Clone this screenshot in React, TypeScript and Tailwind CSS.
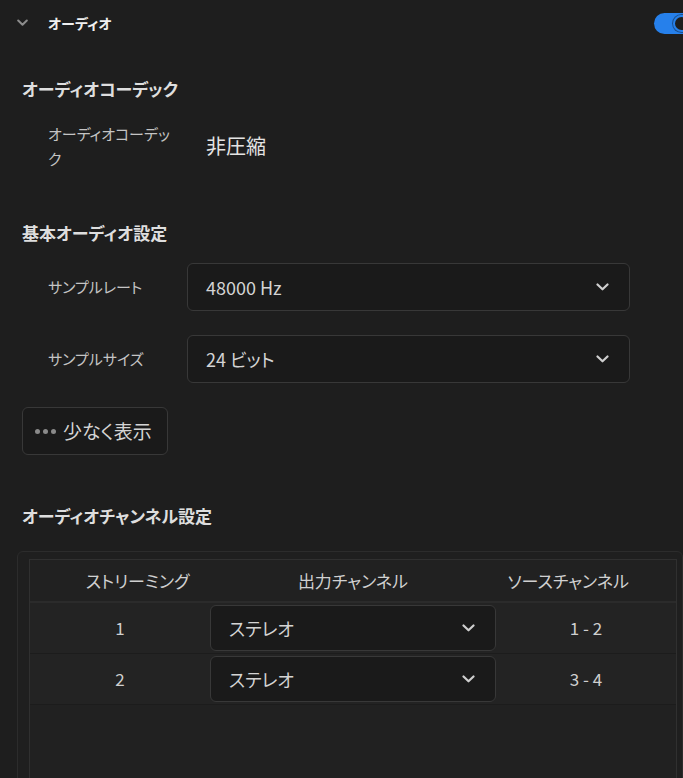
import React from 'react';

const font = { fontFamily: '"Noto Sans CJK JP", "Noto Sans", sans-serif' };

const Chevron = ({ className = '' }: { className?: string }) => (
    <svg width="13" height="8" viewBox="0 0 13 8" className={className} fill="none">
        <path d="M1.5 1.5 L6.5 6.3 L11.5 1.5" stroke="currentColor" strokeWidth="2.2" strokeLinecap="round" strokeLinejoin="round" />
    </svg>
);

const Select = ({ value, className = '' }: { value: string; className?: string }) => (
    <div className={`flex items-center justify-between rounded-md border border-[#383838] bg-[#1a1a1a] pl-[18px] pr-[20px] text-[#d4d4d4] ${className}`}>
        <span>{value}</span>
        <Chevron className="text-[#cfcfcf]" />
    </div>
);

const Heading = ({ children, className = '' }: { children: React.ReactNode; className?: string }) => (
    <h2 className={`pl-[22px] text-[17px] leading-[24px] font-bold text-[#dedede] ${className}`}>{children}</h2>
);

const rows = [
    { n: '1', out: 'ステレオ', src: '1 - 2' },
    { n: '2', out: 'ステレオ', src: '3 - 4' },
];

export default function App() {
    return (
        <div style={font} className="w-[683px] h-[778px] overflow-hidden bg-[#1e1e1e] [font-feature-settings:'palt']">
            {/* section header */}
            <div className="flex items-center h-[46px] pl-[17px]">
                <svg width="11" height="8" viewBox="0 0 11 8" fill="none" className="text-[#8c8c8c]">
                    <path d="M1.2 1.5 L5.5 5.8 L9.8 1.5" stroke="currentColor" strokeWidth="2" strokeLinecap="round" strokeLinejoin="round" />
                </svg>
                <span className="ml-[20px] text-[14px] font-bold text-[#f0f0f0]">オーディオ</span>
                <div className="flex-1" />
                <div className="relative shrink-0 w-[40px] h-[21px] rounded-full bg-[#2680eb] mr-[-11px]">
                    <div className="absolute right-[4px] top-[2px] w-[17px] h-[17px] rounded-full bg-[#1e1e1e] border-2 border-[#2680eb] shadow-[0_0_0_1px_#1a4f8f]" />
                </div>
            </div>

            <Heading className="mt-[31px]">オーディオコーデック</Heading>
            <div className="flex items-center mt-[20px] pl-[48px]">
                <div className="w-[158px]">
                    <p className="w-[122px] text-[15px] leading-[25px] text-[#c4c4c4]">オーディオコーデック</p>
                </div>
                <span className="text-[20px] text-[#e4e4e4]">非圧縮</span>
            </div>

            <Heading className="mt-[50px]">基本オーディオ設定</Heading>
            <div className="flex flex-col gap-[24px] mt-[18px] pl-[48px]">
                <div className="flex items-center">
                    <span className="w-[139px] text-[15px] text-[#c4c4c4]">サンプルレート</span>
                    <Select value="48000 Hz" className="w-[443px] h-[48px] text-[18px]" />
                </div>
                <div className="flex items-center">
                    <span className="w-[139px] text-[15px] text-[#c4c4c4]">サンプルサイズ</span>
                    <Select value="24 ビット" className="w-[443px] h-[48px] text-[18px]" />
                </div>
            </div>

            <div className="pl-[22px] mt-[24px]">
                <button className="flex items-center w-[146px] h-[48px] rounded-md border border-[#383838] bg-[#1a1a1a] pl-[12px] text-[19px] text-[#d4d4d4]">
                    <span className="flex gap-[3px] mr-[7px]">
                        <span className="w-[5px] h-[5px] rounded-full bg-[#8a8a8a]" />
                        <span className="w-[5px] h-[5px] rounded-full bg-[#8a8a8a]" />
                        <span className="w-[5px] h-[5px] rounded-full bg-[#8a8a8a]" />
                    </span>
                    少なく表示
                </button>
            </div>

            <Heading className="mt-[49px]">オーディオチャンネル設定</Heading>

            {/* channel table */}
            <div className="ml-[17px] mt-[23px] w-[666px] h-[300px] rounded-md border border-[#2c2c2c] bg-[#1f1f1f] pt-[7px] pl-[11px] pr-[5px]">
                <div className="h-full border border-[#303030] bg-[#212121]">
                    <div className="grid grid-cols-3 h-[43px] items-center border-b-2 border-[#2b2b2b] text-[17px] text-[#d0d0d0] text-center">
                        <span>ストリーミング</span>
                        <span>出力チャンネル</span>
                        <span>ソースチャンネル</span>
                    </div>
                    {rows.map((r) => (
                        <div key={r.n} className="grid grid-cols-[180px_286px_1fr] items-center h-[51px] border-b border-[#1c1c1c] bg-[#232323] text-[17px] text-[#cfcfcf]">
                            <span className="text-center">{r.n}</span>
                            <Select value={r.out} className="h-[46px] text-[18px]" />
                            <span className="text-center">{r.src}</span>
                        </div>
                    ))}
                </div>
            </div>
        </div>
    );
}
